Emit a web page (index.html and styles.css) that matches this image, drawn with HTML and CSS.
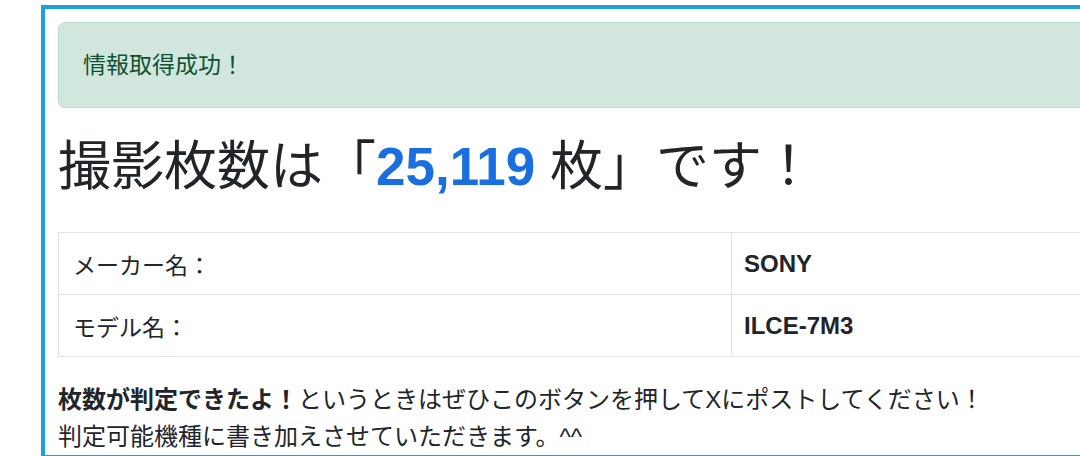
FILE: index.html
```html
<!DOCTYPE html>
<html lang="ja">
<head>
    <meta charset="UTF-8">
    <meta name="viewport" content="width=device-width, initial-scale=1.0">
    <title>撮影枚数チェック</title>
    <link rel="stylesheet" href="styles.css">
</head>
<body>
    <div class="result-container">
        <div class="alert-success">情報取得成功！</div>

        <h1 class="shot-count">撮影枚数は「<span class="count-number">25,119</span> 枚」です！</h1>

        <table class="camera-info">
            <tbody>
                <tr>
                    <td>メーカー名：</td>
                    <td class="value">SONY</td>
                </tr>
                <tr>
                    <td>モデル名：</td>
                    <td class="value">ILCE-7M3</td>
                </tr>
            </tbody>
        </table>

        <p class="note">
            <strong>枚数が判定できたよ！</strong>というときはぜひこのボタンを押してXにポストしてください！<br>
            判定可能機種に書き加えさせていただきます。^^
        </p>
    </div>
</body>
</html>
```

FILE: styles.css
```css
body {
    font-family: "Liberation Sans", "Noto Sans CJK JP", sans-serif;
    color: #212529;
    margin: 0;
    overflow: hidden;
    background: white;
}

.result-container {
    width: 1100px;
    margin: 5px 0 0 41px;
    border: 4px solid #1ba1e2;
    padding: 13px 0 0 13px;
}

.alert-success {
    background-color: #d1e7dd;
    border: 1px solid #badbcc;
    border-radius: 7px;
    color: #0f5132;
    font-size: 23px;
    line-height: 30px;
    padding: 27px 24px;
}

.shot-count {
    font-size: 53px;
    font-weight: normal;
    line-height: 58px;
    margin: 30px 0 36px 0;
}

.count-number {
    color: #1a6fe0;
    font-weight: bold;
}

.camera-info {
    width: 1087px;
    border-collapse: collapse;
    font-size: 23px;
}

.camera-info td {
    border: 1px solid #dee2e6;
    height: 61px;
    padding: 0 14px;
}

.camera-info td:first-child {
    width: 644px;
}

.camera-info td.value {
    font-weight: bold;
    font-size: 24px;
    padding-left: 12px;
}

.note {
    font-size: 24px;
    line-height: 37px;
    margin: 24px 0 0 0;
}
```
